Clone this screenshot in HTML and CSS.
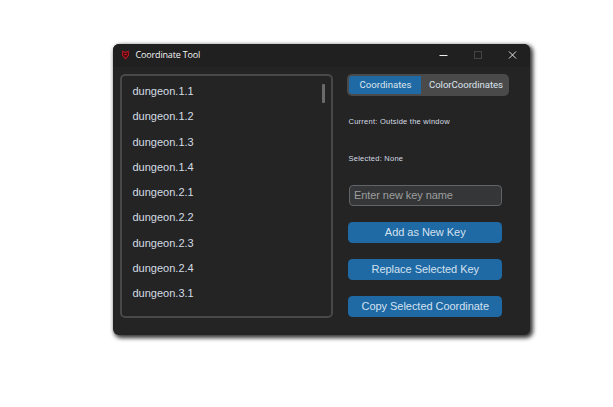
FILE: index.html
```html
<!DOCTYPE html>
<html lang="en">
<head>
<meta charset="utf-8">
<title>Coordinate Tool</title>
<link rel="stylesheet" href="styles.css">
</head>
<body>
<main class="window">
  <header class="titlebar">
    <svg class="app-icon" width="9" height="10" viewBox="0 0 9 10"><path d="M1.7 1.3l-.2 4L4.5 8.7l3-3.4-.2-4L4.5 2.6z" fill="#42080d" stroke="#b81522" stroke-width="1.1"/><path d="M3.2 4.6h2.6" stroke="#d51f2c"/></svg>
    <span class="title">Coordinate Tool</span>
    <svg class="controls" width="76" height="12" viewBox="0 0 76 12" fill="none"><path d="M.5 6.5h8" stroke="#eee"/><rect x="35.5" y="2.5" width="7" height="7" stroke="#444"/><path d="M70 2.5l7 7M77 2.5l-7 7" stroke="#e4e4e4"/></svg>
  </header>
  <div class="content">
    <section class="list">
      <ul class="items">
        <li>dungeon.1.1</li>
        <li>dungeon.1.2</li>
        <li>dungeon.1.3</li>
        <li>dungeon.1.4</li>
        <li>dungeon.2.1</li>
        <li>dungeon.2.2</li>
        <li>dungeon.2.3</li>
        <li>dungeon.2.4</li>
        <li>dungeon.3.1</li>
      </ul>
      <div class="thumb"></div>
    </section>
    <section class="panel">
      <div class="tabs">
        <button class="tab active">Coordinates</button>
        <button class="tab color">ColorCoordinates</button>
      </div>
      <p class="status current">Current: Outside the window</p>
      <p class="status selected">Selected: None</p>
      <input class="key" placeholder="Enter new key name" aria-label="Key name">
      <button class="action">Add as New Key</button>
      <button class="action">Replace Selected Key</button>
      <button class="action">Copy Selected Coordinate</button>
    </section>
  </div>
</main>
</body>
</html>
```
FILE: styles.css
```css
* { box-sizing: border-box; }
body { margin: 0; height: 100vh; padding: 43.5px 0 0 112.5px; background: #fff; overflow: hidden; font-family: "Liberation Sans", Arial, sans-serif; }
button, input { font-family: inherit; margin: 0; border: 0; padding: 0; }
.window { width: 417.5px; height: 291.5px; border-radius: 6px; background: #242424; overflow: hidden; box-shadow: 2px 2px 4px 1px rgba(0, 0, 0, .8); }
.titlebar { height: 23.5px; background: #202020; display: flex; align-items: center; padding: 0 15px 0 8px; }
.app-icon { flex: none; }
.title { margin-left: 6px; color: #f4f4f4; font: 9px/12px "Open Sans", sans-serif; letter-spacing: -.16px; white-space: nowrap; }
.controls { margin-left: auto; overflow: visible; }
.content { display: flex; padding: 7px 0 0 7.5px; }
.list { width: 213px; height: 244px; border: 2px solid #484848; border-radius: 5px; display: flex; justify-content: space-between; padding: 3px 6px 0 10.5px; }
.items { list-style: none; margin: 0; padding: 0; color: #d5dce5; font-size: 11px; }
.items li { height: 25.25px; line-height: 25.25px; }
.thumb { width: 3px; height: 19px; margin-top: 5px; background: #6a6a6a; border-radius: 1px; }
.panel { width: 162px; margin-left: 14px; display: flex; flex-direction: column; align-items: flex-start; }
.tabs { width: 162px; height: 21.5px; border-radius: 5px; background: #4a4a4a; padding: 2px; display: flex; flex: none; }
.tab { flex: none; width: 86px; background: none; color: #dce4ee; font: 9.6px/17px Roboto, sans-serif; white-space: nowrap; }
.active { width: 72px; padding-left: 1px; background: #1f6aa5; border-radius: 3px 0 0 3px; }
.color { padding-left: 4px; letter-spacing: -.03px; }
.status { margin: 0 0 0 1.5px; color: #d5dce5; font-size: 7.5px; letter-spacing: .25px; line-height: 10px; white-space: nowrap; }
.current { margin-top: 21.5px; }
.selected { margin-top: 27px; }
.key { width: 153.5px; height: 21.5px; margin: 20.5px 0 0 1.5px; border: 1.5px solid #626567; border-radius: 4px; background: #343638; font-size: 11px; letter-spacing: -.08px; padding: 0 4.5px; color: #dce4ee; }
.key::placeholder { color: #9e9e9e; opacity: 1; }
.action { width: 153.5px; height: 21.5px; margin: 15.5px 0 0 1px; border-radius: 4.5px; background: #1f6aa5; color: #d5e1ef; font-size: 11px; letter-spacing: -.04px; line-height: 21px; padding-left: 1px; white-space: nowrap; }
```
